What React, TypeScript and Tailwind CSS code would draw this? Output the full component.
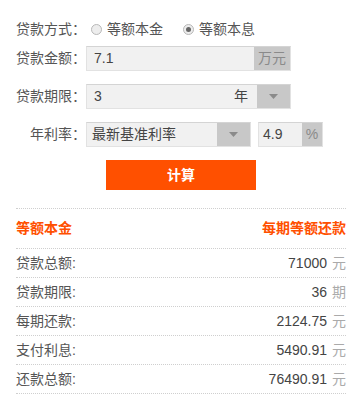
const font = { fontFamily: '"Liberation Sans", "Noto Sans CJK SC", sans-serif' };

function Caret() {
  return (
    <svg width="9" height="5" viewBox="0 0 9 5" aria-hidden="true">
      <path d="M0 0h9L4.5 5z" fill="#8a8a8a" />
    </svg>
  );
}

function Radio({ checked }: { checked?: boolean }) {
  return (
    <span className="flex h-[11px] w-[11px] items-center justify-center rounded-full border border-[#b8b8b8] bg-[#ededed]">
      {checked && <span className="h-[5px] w-[5px] rounded-full bg-[#666]" />}
    </span>
  );
}

function Label({ children }: { children: string }) {
  return (
    <span className="w-[70px] shrink-0 text-right text-[14px] text-[#555]">{children}</span>
  );
}

const boxCls =
  "flex h-[25px] items-center border border-[#e2e2e2] border-t-[#d4d4d4] bg-[#f1f1f1] text-[14px] text-[#444]";

const results = [
  { label: "贷款总额:", value: "71000", unit: "元" },
  { label: "贷款期限:", value: "36", unit: "期" },
  { label: "每期还款:", value: "2124.75", unit: "元" },
  { label: "支付利息:", value: "5490.91", unit: "元" },
  { label: "还款总额:", value: "76490.91", unit: "元" },
];

export default function App() {
  return (
    <div className="h-[403px] w-[362px] bg-white px-4 pt-[17px]" style={font}>
      {/* Form */}
      <div className="flex h-[25px] items-center">
        <Label>贷款方式：</Label>
        <label className="ml-[5px] flex items-center gap-[5px] text-[14px] text-[#555]">
          <Radio />
          等额本金
        </label>
        <label className="ml-[20px] flex items-center gap-[5px] text-[14px] text-[#555]">
          <Radio checked />
          等额本息
        </label>
      </div>

      <div className="mt-[4px] flex items-center">
        <Label>贷款金额：</Label>
        <div className={`${boxCls} w-[205px]`}>
          <span className="flex-1 pl-[7px]">7.1</span>
          <span className="flex h-full w-[36px] items-center justify-center bg-[#c8c8c8] text-[#8a8a8a]">
            万元
          </span>
        </div>
      </div>

      <div className="mt-[13px] flex items-center">
        <Label>贷款期限：</Label>
        <div className={`${boxCls} w-[205px]`}>
          <span className="flex-1 pl-[7px]">3</span>
          <span className="mr-[9px]">年</span>
          <span className="flex h-full w-[33px] items-center justify-center bg-[#c8c8c8]">
            <Caret />
          </span>
        </div>
      </div>

      <div className="mt-[13px] flex items-center">
        <Label>年利率：</Label>
        <div className={`${boxCls} w-[165px]`}>
          <span className="flex-1 pl-[5px]">最新基准利率</span>
          <span className="flex h-full w-[33px] items-center justify-center bg-[#c8c8c8]">
            <Caret />
          </span>
        </div>
        <div className={`${boxCls} ml-[7px] w-[65px]`}>
          <span className="flex-1 pl-[4px]">4.9</span>
          <span className="flex h-full w-[20px] items-center justify-center bg-[#c8c8c8] text-[#8a8a8a]">
            %
          </span>
        </div>
      </div>

      <button className="mx-auto mt-[13px] flex h-[30px] w-[150px] items-center justify-center bg-[#ff5000] text-[14px] font-bold text-white">
        计算
      </button>

      {/* Results */}
      <div className="mt-[18px]">
        <div className="flex h-[41px] items-center justify-between border-y border-dotted border-[#cfcfcf] text-[14px] font-bold text-[#ff5000]">
          <span>等额本金</span>
          <span>每期等额还款</span>
        </div>
        {results.map((r) => (
          <div
            key={r.label}
            className="flex h-[29px] items-center justify-between border-b border-dotted border-[#cfcfcf] text-[14px]"
          >
            <span className="text-[#555]">{r.label}</span>
            <span className="text-[#444]">
              {r.value}
              <span className="ml-[5px] text-[#aaa]">{r.unit}</span>
            </span>
          </div>
        ))}
      </div>
    </div>
  );
}
